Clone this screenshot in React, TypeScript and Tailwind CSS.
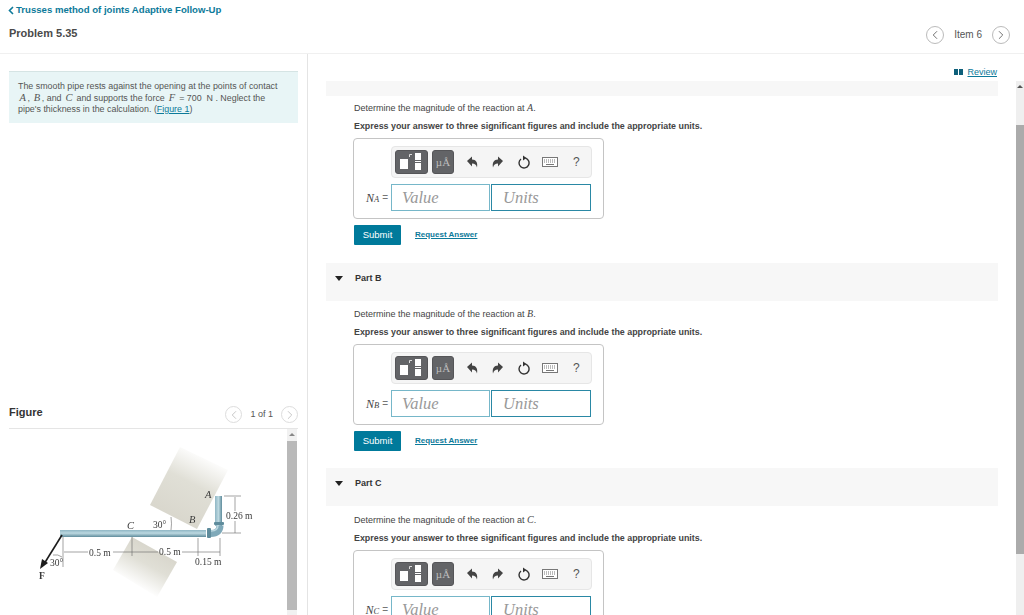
import { ChevronLeft, ChevronRight } from "lucide-react";

const SERIF = "font-['Liberation_Serif',serif]";

function CircleNav({ dir, size, faded }: { dir: "l" | "r"; size: string; faded?: boolean }) {
  const Icon = dir === "l" ? ChevronLeft : ChevronRight;
  return (
    <span className={`flex items-center justify-center rounded-full border ${size} ${faded ? "border-[#dddddd] text-[#bbbbbb]" : "border-[#bbbbbb] text-[#555555]"}`}>
      <Icon size={14} strokeWidth={1.4} />
    </span>
  );
}

function MathVar({ children }: { children: string }) {
  return <i className={`mx-[1.500px] text-[10.500px] ${SERIF}`}>{children}</i>;
}

function Toolbar() {
  return (
    <div className="ml-[37px] flex h-[32px] w-[201px] items-center rounded-[4px] border border-[#e6e6e6] bg-[#f5f5f5] pl-[3px]">
      <span className="flex h-[24px] w-[33px] rounded-[3px] border border-[#555558] bg-[#636467]">
        <svg width="31" height="22" viewBox="0 0 31 22">
          <rect x="4" y="8" width="8" height="10" fill="#fff" />
          <path d="M13.500 6V3.500H16" stroke="#ddd" fill="none" />
          <rect x="19" y="2" width="6" height="7" fill="#fff" />
          <rect x="19" y="10" width="6" height="1" fill="#fff" />
          <rect x="19" y="12" width="6" height="7" fill="#fff" />
        </svg>
      </span>
      <span className={`ml-[4px] flex h-[24px] w-[22px] items-center justify-center rounded-[3px] border border-[#555558] bg-[#636467] text-[11px] text-[#bdbdbd] ${SERIF}`}>
        µÅ
      </span>
      <svg className="ml-[11px]" width="14" height="14" viewBox="0 0 14 14">
        <path d="M2 6 7 1.500v3c4 0 6 3 5 8-1-3-2-4-5-4v3z" fill="#444" />
      </svg>
      <svg className="ml-[12px]" width="14" height="14" viewBox="0 0 14 14">
        <path d="M12 6 7 1.500v3c-4 0-6 3-5 8 1-3 2-4 5-4v3z" fill="#444" />
      </svg>
      <svg className="ml-[12px]" width="14" height="14" viewBox="0 0 14 14">
        <path d="M8.500 3.200A5 5 0 1 1 4 4" fill="none" stroke="#333" strokeWidth="1.4" />
        <path d="M6 .5 9.500 3 6 5.500z" fill="#333" />
      </svg>
      <svg className="ml-[11px]" width="16" height="10" viewBox="0 0 16 10">
        <rect x=".5" y=".5" width="15" height="9" fill="#fff" stroke="#777" />
        <path d="M2 3h12M2 5h12" stroke="#777" strokeDasharray="1 1" />
        <path d="M4 7.500h8" stroke="#777" />
      </svg>
      <span className="ml-[15px] font-['Liberation_Sans',sans-serif] text-[12px] text-[#555555]">?</span>
    </div>
  );
}

function AnswerBox({ sub }: { sub: string }) {
  return (
    <div className="-ml-px mt-[6px] h-[81px] w-[251px] rounded-[4px] border border-[#c4c4c4] pt-[7px]">
      <Toolbar />
      <div className="mt-[6px] flex h-[27px] items-center">
        <span className={`flex w-[37px] items-center justify-end pr-[3px] text-[12px] text-[#444444] ${SERIF}`}>
          <i>N</i>
          <i className="mt-[3px] text-[8.500px]">{sub}</i>
          <span className="ml-[3px] font-['Liberation_Sans',sans-serif] text-[10px] text-[#777777]">=</span>
        </span>
        <span className={`flex h-[27px] w-[99px] items-center border border-[#76b7c9] pl-[10px] pt-[1px] text-[16.500px] italic text-[#999999] ${SERIF}`}>Value</span>
        <span className={`ml-[1px] flex h-[27px] w-[100px] items-center border border-[#2a88a5] pl-[11px] pt-[1px] text-[16.500px] italic text-[#999999] ${SERIF}`}>Units</span>
      </div>
    </div>
  );
}

function PartBody({ letter, sub }: { letter: string; sub: string }) {
  return (
    <div className="pl-[28px]">
      <p className="text-[9px] leading-[12px] text-[#444444]">
        Determine the magnitude of the reaction at <i className={`text-[10px] ${SERIF}`}>{letter}</i>.
      </p>
      <p className="mt-[6px] text-[8.900px] font-bold leading-[12px] text-[#444444]">
        Express your answer to three significant figures and include the appropriate units.
      </p>
      <AnswerBox sub={sub} />
      <div className="mt-[6px] flex h-[20px] items-center">
        <span className="flex h-[20px] w-[47px] items-center justify-center rounded-[1px] bg-[#007a9b] text-[9.500px] text-white">Submit</span>
        <span className="ml-[14px] text-[8px] font-bold text-[#0d7a9a] underline">Request Answer</span>
      </div>
    </div>
  );
}

function PartHeader({ label }: { label: string }) {
  return (
    <div className="flex h-[38px] items-start bg-[#f7f7f7] pl-[9px] pt-[9px]">
      <span className="mt-[4px] h-0 w-0 border-x-[4px] border-t-[5px] border-x-transparent border-t-[#222222]" />
      <span className="ml-[12px] text-[9px] font-bold leading-[13px] text-[#333333]">{label}</span>
    </div>
  );
}

// drawn in page coordinates, the viewBox starts where the figure panel starts
function PipeFigure() {
  const dim = "#666666";
  return (
    <svg width="278" height="186" viewBox="9 429 278 186" className="shrink-0 blur-[0.3px]">
      <defs>
        <linearGradient id="blockTop" gradientUnits="userSpaceOnUse" x1="173" y1="517" x2="205" y2="455">
          <stop offset="0" stopColor="#d9d7cd" />
          <stop offset="0.55" stopColor="#e0dfd6" />
          <stop offset="1" stopColor="#ffffff" />
        </linearGradient>
        <linearGradient id="blockBottom" gradientUnits="userSpaceOnUse" x1="155" y1="550" x2="135" y2="586">
          <stop offset="0" stopColor="#d9d7cd" />
          <stop offset="0.4" stopColor="#e0dfd6" />
          <stop offset="1" stopColor="#ffffff" />
        </linearGradient>
        <linearGradient id="pipe" x1="0" y1="0" x2="0" y2="1">
          <stop offset="0" stopColor="#8fb6c4" />
          <stop offset="0.45" stopColor="#bcd8e0" />
          <stop offset="1" stopColor="#5f8c9c" />
        </linearGradient>
        <linearGradient id="pipeUp" x1="0" y1="0" x2="1" y2="0">
          <stop offset="0" stopColor="#8fb6c4" />
          <stop offset="0.5" stopColor="#bcd8e0" />
          <stop offset="1" stopColor="#5f8c9c" />
        </linearGradient>
      </defs>
      <polygon points="150,505 197,529 228,470 180,447" fill="url(#blockTop)" />
      <polygon points="132,537 177,562 157,597 113,570" fill="url(#blockBottom)" />

      <g fill="none" stroke={dim} strokeWidth=".6">
        <path d="M64 552h24M113 552h45M182 552h38" />
        <path d="M132 537v19M198 538v18M220 538v18" />
        <path d="M224 496h17M222 533h19M235 497v14M235 521v12" />
        <path d="M171 530q1-6 0-13" />
        <path d="M63 537v30M53 555q5-1 9 2" />
      </g>

      <rect x="60" y="530" width="146" height="7" fill="url(#pipe)" />
      <rect x="215" y="496" width="7" height="30" fill="url(#pipeUp)" />
      <path d="M207 533.500h4c6 0 9-3 9-8" fill="none" stroke="#7fa9b9" strokeWidth="7" />
      <path d="M207 531h4c4 0 7-2 7-6" fill="none" stroke="#bcd8e0" strokeWidth="1.500" />
      <rect x="207" y="528" width="4" height="10" rx="1" fill="#5f8c9c" />
      <rect x="214" y="522" width="10" height="3" rx="1" fill="#5f8c9c" />

      <path d="M62 535 44 564" stroke="#1c1c1c" strokeWidth="1.600" />
      <polygon points="40,569 42,559 48,563" fill="#1c1c1c" />

      <g className={SERIF} fontSize="9.500" fill="#3a3a3a">
        <text x="89" y="556">0.5 m</text>
        <text x="159" y="555">0.5 m</text>
        <text x="195" y="565">0.15 m</text>
        <text x="226" y="519">0.26 m</text>
        <text x="153" y="528">30°</text>
        <text x="50" y="566">30°</text>
        <g fontStyle="italic" fontSize="10.500">
          <text x="127" y="529">C</text>
          <text x="189" y="523">B</text>
          <text x="205" y="498">A</text>
        </g>
        <text x="39" y="579" fontWeight="bold" fontSize="9.500">F</text>
      </g>
    </svg>
  );
}

export default function App() {
  return (
    <div className="flex h-[615px] w-[1024px] flex-col overflow-hidden bg-white font-['Liberation_Sans',sans-serif]">
      <header className="h-[54px] shrink-0 border-b border-[#f0f0f0]">
        <div className="flex items-center pl-[8px] pt-[3px] text-[9.600px] font-bold text-[#0d7a9a]">
          <svg width="6" height="9" viewBox="0 0 6 9" className="mr-[2px]">
            <path d="M5 1 1.500 4.500 5 8" fill="none" stroke="#0d7a9a" strokeWidth="1.600" />
          </svg>
          Trusses method of joints Adaptive Follow-Up
        </div>
        <div className="flex items-center justify-between pl-[9px] pr-[14px] pt-[8px]">
          <span className="mb-[2px] text-[11px] font-bold text-[#4a4a4a]">Problem 5.35</span>
          <span className="flex items-center gap-[10px]">
            <CircleNav dir="l" size="h-[18px] w-[18px]" />
            <span className="text-[10px] text-[#555555]">Item 6</span>
            <CircleNav dir="r" size="h-[18px] w-[18px]" />
          </span>
        </div>
      </header>

      <div className="flex min-h-0 flex-1">
        <aside className="flex w-[308px] shrink-0 flex-col border-r border-[#e4e4e4] px-[9px]">
          <div className="mt-[17px] h-[52px] border-t border-[#d5e4e4] bg-[#e8f5f6] px-[9px] pt-[9px] text-[8.900px] leading-[11px] text-[#555555]">
            The smooth pipe rests against the opening at the points of contact
            <br />
            <MathVar>A</MathVar>, <MathVar>B</MathVar>, and <MathVar>C</MathVar> and supports the force <MathVar>F</MathVar> = 700 &nbsp;N . Neglect the
            <br />
            pipe's thickness in the calculation. (<span className="text-[#0d7a9a] underline">Figure 1</span>)
          </div>
          <div className="mt-[274px] flex h-[32px] shrink-0 items-end justify-between border-b border-[#e5e5e5] pb-[5px]">
            <span className="mt-[9px] self-start text-[11px] font-bold leading-[13px] text-[#333333]">Figure</span>
            <span className="flex items-center gap-[8px]">
              <CircleNav dir="l" size="h-[17px] w-[17px]" faded />
              <span className="text-[9px] text-[#555555]">1 of 1</span>
              <CircleNav dir="r" size="h-[17px] w-[17px]" faded />
            </span>
          </div>
          <div className="flex min-h-0 flex-1 justify-between">
            <PipeFigure />
            <div className="mr-[1px] flex w-[10px] flex-col bg-[#f1f1f1]">
              <span className="mx-auto mt-[4px] h-0 w-0 border-x-[3px] border-b-[3px] border-x-transparent border-b-[#888888]" />
              <span className="mt-[5px] h-[169px] bg-[#b9b9b9]" />
            </div>
          </div>
        </aside>

        <main className="relative min-w-0 flex-1 pl-[18px] pr-[26px]">
          <div className="flex h-[27px] items-start justify-end pr-[1px] pt-[13px] text-[9px] leading-[10px] text-[#0d7a9a]">
            <span className="mr-[4px] mt-[2px] flex h-[6px] w-[9px] gap-[1px]">
              <span className="flex-1 bg-[#0d5f7a]" />
              <span className="flex-1 bg-[#0d5f7a]" />
            </span>
            <span className="underline">Review</span>
          </div>
          <div className="h-[15px] bg-[#f7f7f7]" />
          <div className="mt-[6px]">
            <PartBody letter="A" sub="A" />
          </div>
          <div className="mt-[18px]"><PartHeader label="Part B" /></div>
          <div className="mt-[7px]"><PartBody letter="B" sub="B" /></div>
          <div className="mt-[17px]"><PartHeader label="Part C" /></div>
          <div className="mt-[8px]"><PartBody letter="C" sub="C" /></div>
          <div className="absolute bottom-0 right-0 top-[27px] flex w-[8px] flex-col bg-[#efefef]">
            <span className="mx-auto mt-[4px] h-0 w-0 border-x-[3px] border-b-[3px] border-x-transparent border-b-[#555555]" />
            <span className="mt-[37px] h-[429px] shrink-0 bg-[#ababab]" />
          </div>
        </main>
      </div>
    </div>
  );
}
